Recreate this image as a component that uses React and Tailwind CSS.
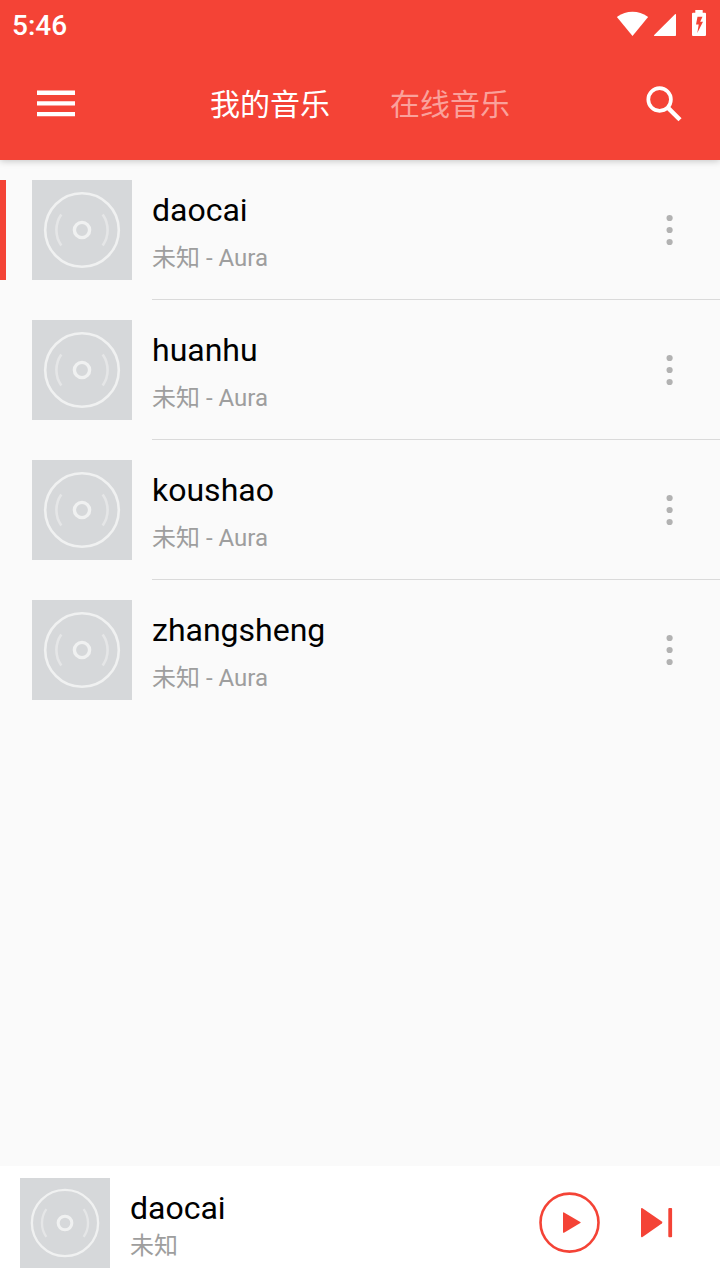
const TABS = [
  { label: '我的音乐', active: true },
  { label: '在线音乐', active: false },
];

const SONGS = [
  { title: 'daocai',     artist: '未知', album: 'Aura' },
  { title: 'huanhu',     artist: '未知', album: 'Aura' },
  { title: 'koushao',    artist: '未知', album: 'Aura' },
  { title: 'zhangsheng', artist: '未知', album: 'Aura' },
];

// Default album cover, scales with the size class it is given
function Cover({ className }) {
  return (
    <svg viewBox="0 0 100 100" fill="none" className={`shrink-0 bg-[#d6d8da] ${className}`}>
      <circle cx="50" cy="50" r="36.8" stroke="#f0f1f1" strokeWidth="2.6" />
      <circle cx="50" cy="50" r="7.6" stroke="#f0f1f1" strokeWidth="3.4" />
      <path d="M29.3 34.5A27 27 0 0 0 29.3 65.5M70.7 34.5A27 27 0 0 1 70.7 65.5" stroke="#e5e6e7" strokeWidth="2.6" />
    </svg>
  );
}

function StatusBar() {
  return (
    <div className="flex h-12 items-center justify-between pl-3 pr-3.5">
      <span className="pt-1 text-[28px] leading-8 font-medium">5:46</span>
      <svg viewBox="616 0 90 48" fill="currentColor" className="h-12 w-[90px]">
        <path d="M632.5 36L617.3 17.6Q616.9 17 617.5 16.5C621.8 13.2 627 11.7 632.5 11.7S643.2 13.2 647.5 16.5Q648.1 17 647.7 17.6Z" />
        <path d="M676 14.5V35.2Q676 36 675.2 36H654.6Q653.4 36 654.2 35.1L675 14.3Q676 13.5 676 14.5Z" />
        <path
          fillRule="evenodd"
          d="M695.3 12.7V10H702.7V12.7H705Q706 12.7 706 13.7V35Q706 36 705 36H693Q692 36 692 35V13.7Q692 12.7 693 12.7ZM697.5 16.8L696 24.5H698.7L697.3 33L703 21.7H700.2L702.5 16.8Z"
        />
      </svg>
    </div>
  );
}

function Header() {
  return (
    <header className="relative h-40 shrink-0 bg-[#f44336] text-white shadow-[0_1px_7px_rgba(0,0,0,0.22)]">
      <StatusBar />
      <div className="flex h-28 items-center justify-between">
        <svg viewBox="0 0 112 112" fill="currentColor" className="size-28">
          <path d="M37 42.6h38v4.4H37zM37 53.2h38v4.3H37zM37 64h38v4.2H37z" />
        </svg>
        <nav className="flex pt-0.5 text-[30px] leading-[44px]">
          {TABS.map((tab) => (
            <span key={tab.label} className={`px-[30px] ${tab.active ? 'text-white' : 'text-[#faa19b]'}`}>
              {tab.label}
            </span>
          ))}
        </nav>
        <svg viewBox="608 48 112 112" fill="none" stroke="currentColor" className="size-28">
          <circle cx="659.6" cy="99.5" r="11.3" strokeWidth="3.7" />
          <path d="M667.8 107.6L680 119.8" strokeWidth="4.4" />
        </svg>
      </div>
    </header>
  );
}

function SongRow({ song, playing, last }) {
  return (
    <li className="flex h-[140px] items-center">
      <div className={`mr-[26px] h-[100px] w-1.5 shrink-0 ${playing ? 'bg-[#f44336]' : ''}`} />
      <Cover className="mr-5 size-[100px]" />
      <div className={`flex h-full flex-1 items-center justify-between ${last ? 'pb-px' : 'border-b border-[#dadada]'}`}>
        <div className="pt-2">
          <p className="text-[32px] leading-[48px] text-black">{song.title}</p>
          <p className="text-2xl leading-[48px] text-[#9e9e9e]">
            {song.artist} - {song.album}
          </p>
        </div>
        <svg viewBox="0 0 100 60" className="h-[60px] w-[100px]" fill="#b2b2b2">
          <circle cx="49.6" cy="18" r="3.1" />
          <circle cx="49.6" cy="30" r="3.1" />
          <circle cx="49.6" cy="42" r="3.1" />
        </svg>
      </div>
    </li>
  );
}

function PlayBar({ song }) {
  return (
    <footer className="flex h-[114px] shrink-0 items-center bg-white pl-5">
      <Cover className="mr-5 size-[90px]" />
      <div className="flex-1 pt-[7px]">
        <p className="text-[32px] leading-[38px] text-black">{song.title}</p>
        <p className="text-2xl leading-[38px] text-[#9e9e9e]">{song.artist}</p>
      </div>
      <svg viewBox="530 1183 80 80" className="size-20 text-[#f44336]" fill="currentColor">
        <circle cx="569.5" cy="1222.6" r="29" fill="none" stroke="currentColor" strokeWidth="2.6" />
        <path d="M563 1213Q563 1212 564 1212.4L580.3 1221.9Q581.2 1222.5 580.3 1223.1L564 1232.7Q563 1233.2 563 1232Z" />
      </svg>
      <svg viewBox="610 1183 110 80" className="h-20 w-[110px] text-[#f44336]" fill="currentColor">
        <path d="M641 1209Q641 1207.5 642.5 1208.2L661.8 1221.6Q663 1222.6 661.8 1223.5L642.5 1237Q641 1237.7 641 1236Z" />
        <rect x="668.3" y="1208" width="3.8" height="29.3" rx="1" />
      </svg>
    </footer>
  );
}

export default function App() {
  return (
    <div className="flex h-[1280px] w-[720px] flex-col overflow-hidden bg-[#fafafa] font-[Roboto,'Noto_Sans_CJK_SC',sans-serif]">
      <Header />
      <ul className="flex-1">
        {SONGS.map((song, i) => (
          <SongRow key={song.title} song={song} playing={i === 0} last={i === SONGS.length - 1} />
        ))}
      </ul>
      <PlayBar song={SONGS[0]} />
    </div>
  );
}
